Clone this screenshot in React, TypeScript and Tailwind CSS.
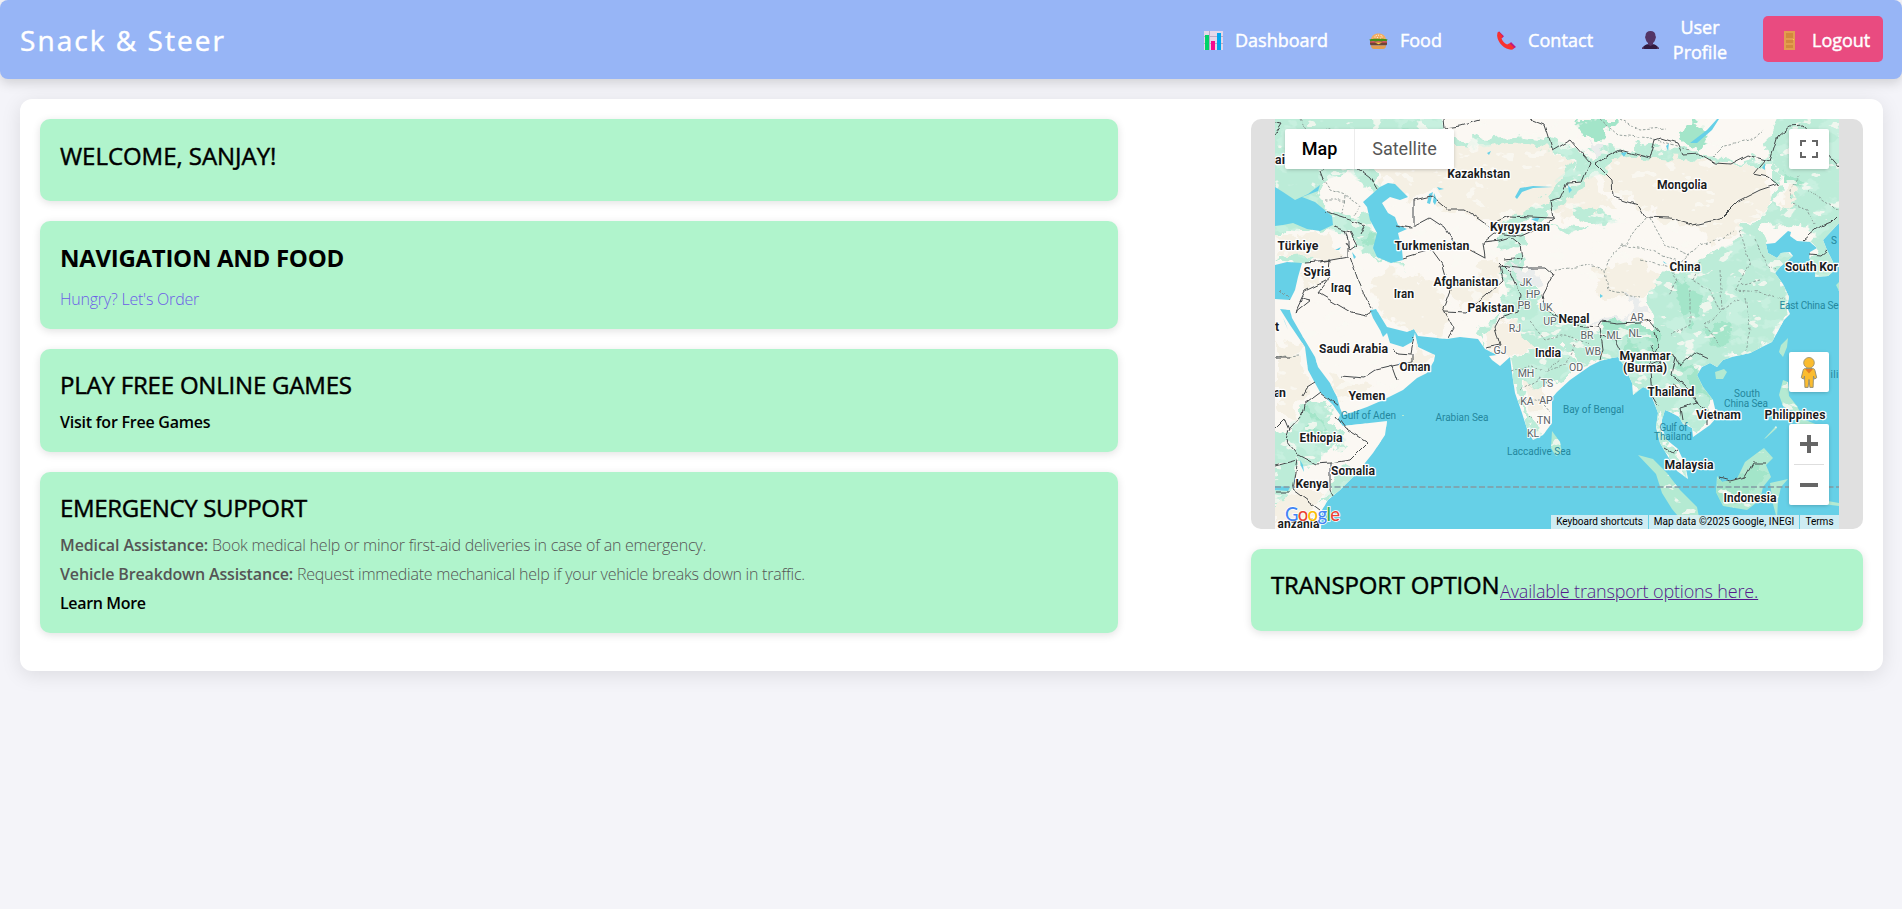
import type { ReactNode } from "react";

const medium = "[-webkit-text-stroke:0.45px_currentColor]";

function ChartIcon() {
  return (
    <svg width="19" height="19" viewBox="0 0 19 19" shapeRendering="crispEdges">
      <rect width="19" height="19" rx="1" fill="#e3d8ea" />
      <path d="M0 5.5h19M5.5 0v19M0 12.5h19" stroke="#b9abc6" strokeWidth="1" />
      <rect x="1" y="4" width="4" height="15" fill="#00d26a" />
      <rect x="7" y="10" width="4" height="9" fill="#f70a8d" />
      <rect x="13" y="2" width="4" height="17" fill="#00a6ed" />
    </svg>
  );
}

function BurgerIcon() {
  return (
    <svg width="19" height="19" viewBox="0 0 19 19">
      <path d="M2 9C2 5 5.2 2.4 9.5 2.4S17 5 17 9Z" fill="#f3ad61" />
      <path d="M5.5 6h1M9 4.2h1M12.5 6h1M8 6.6h1M11 7.2h1M6.8 4.6h1M11.6 4.6h1" stroke="#fff1dc" />
      <path d="M1 11.2h17v2.2c-.5 1-1.500 1.100-2.500 1.100H3.500C2 14.500 1.200 14 1 13Z" fill="#6d4534" />
      <path d="M1 10.300h17v1.200H1z" fill="#f8312f" />
      <path d="M.5 8.500c1-.9 17-.9 18 0l-.8 1.700-3-.3-2.200.7-3-.7-3 .7-2.500-.7-2.700.5Z" fill="#44911b" />
      <path d="M6 11.500h7l-3.500 1.700Z" fill="#fcd53f" />
      <path d="M2 14.500h15c0 2.300-1 3.500-3 3.500H5c-2 0-3-1.200-3-3.500Z" fill="#e39d4f" />
    </svg>
  );
}

function PhoneIcon() {
  return (
    <svg width="19" height="19" viewBox="0 0 19 19">
      <path d="M2 .3 7 5.200 4.600 7.500 1 3ZM14 11l5 5-3 2-4-4.500Z" fill="#c2197c" />
      <path d="M.5 1.500 1.800.8 5.600 5 4.500 7.200c.7 2.600 3.100 5.400 5.600 6.300l2.400-1.200 4.300 4-1 2.200c-6.300 1.300-15-5.500-15.700-13.700Z" fill="#f8312f" />
    </svg>
  );
}

function UserIcon() {
  return (
    <svg width="17" height="18" viewBox="0 0 17 18">
      <path d="M0 18c.3-2.300 2-3.200 5-4.800h7c3 1.600 4.700 2.500 5 4.800Z" fill="#321b41" />
      <path d="M0 18c.2-1 .6-1.700 1.300-2.300L2.500 18Zm17 0c-.2-1-.6-1.700-1.300-2.300L14.500 18Z" fill="#533566" />
      <path d="M8.500 0C11.600 0 13.500 1.700 13.500 5l.5 1-.6 2c-.5 2-1.300 3-2.400 4v1.500l-2.500 1.500L6 13.500V12C4.900 11 4.100 10 3.600 8L3 6l.5-1C3.500 1.700 5.400 0 8.500 0Z" fill="#533566" />
    </svg>
  );
}

function DoorIcon() {
  return (
    <svg width="11" height="19" viewBox="0 0 11 19" shapeRendering="crispEdges">
      <rect width="11" height="19" fill="#e39d4f" />
      <path d="M2 2h7v5H2zM2 9h7v3H2zM2 14h7v3H2z" fill="#d3883e" />
      <path d="M9 8h1v1H9z" fill="#fcd53f" />
    </svg>
  );
}

function Card({ children, className }: { children: ReactNode; className: string }) {
  return (
    <section className={`rounded-[10px] bg-[#b0f4cc] px-5 pt-5 shadow-[0_2px_8px_rgba(0,0,0,0.12)] ${className}`}>
      {children}
    </section>
  );
}

function Title({ children, className }: { children: ReactNode; className: string }) {
  return <h2 className={`text-[24px] leading-[34px] whitespace-nowrap text-black ${className}`}>{children}</h2>;
}

const LAND =
  "M1275 119H1839V223L1823 240 1827 250 1833 262 1835 270 1828 276 1815 277 1816 266 1809 258 1810 252 1817 248 1810 242 1797 241 1790 236 1791 232 1788 231 1775 243 1766 244 1768 253 1777 258 1781 253 1790 252 1793 256 1780 267 1775 273 1783 284 1789 297 1787 307 1790 314 1784 320 1772 342 1750 353 1732 357 1723 360 1717 367 1710 363 1702 367 1697 375 1703 387 1713 400 1717 417 1710 425 1693 437 1692 428 1683 424 1679 417 1670 412 1665 410 1662 420 1662 428 1667 440 1678 449 1685 464 1688 479 1677 471 1667 455 1660 443 1656 427 1658 413 1653 400 1650 390 1643 387 1633 395 1632 383 1625 367 1618 357 1612 358 1600 361 1590 366 1570 380 1557 392 1552 398 1552 423 1543 435 1533 440 1528 432 1522 413 1515 393 1512 373 1510 357 1500 366 1492 360 1489 356 1497 355 1485 349 1478 339 1460 337 1447 339 1418 336 1414 329 1407 332 1387 327 1376 309 1370 310 1373 318 1380 330 1383 337 1387 333 1390 343 1403 347 1412 342 1415 333 1418 347 1435 355 1434 361 1427 373 1417 378 1403 390 1383 400 1367 407 1353 412 1343 415 1340 408 1337 397 1330 383 1318 367 1315 357 1303 337 1292 318 1290 310 1280 309 1290 325 1305 347 1308 370 1315 383 1320 392 1333 405 1340 415 1338 420 1343 426 1387 421 1385 435 1373 453 1357 473 1340 490 1328 500 1322 510 1321 529H1275Z";

const ISLANDS =
  "M1552 431 1560 442 1562 453 1556 456 1551 448ZM1788 338 1787 347 1783 357 1779 352 1781 345ZM1715 372 1724 369 1727 372 1723 379 1716 379ZM1783 380 1788 382 1789 396 1797 406 1801 414 1788 409 1783 406 1779 395ZM1764 439 1776 426 1777 428 1766 438ZM1638 455 1653 459 1667 473 1680 490 1697 507 1700 522 1699 529 1688 528 1672 509 1662 493 1656 474ZM1717 476 1722 482 1737 479 1745 462 1757 453 1764 448 1773 458 1766 465 1771 477 1763 487 1760 500 1747 510 1723 506 1716 492ZM1770 483 1788 479 1781 487 1778 500 1777 519 1773 504ZM1700 529 1725 527 1725 529ZM1402 415 1404 415 1404 416 1402 416ZM1836 285 1839 282V291ZM1808 494 1822 500 1839 503V506L1815 503ZM1795 416 1818 425 1820 440 1801 437ZM1802 476 1806 479 1803 485Z";

const GREEN =
  "M1265 109H1440L1446 134 1464 140 1500 136 1520 134 1550 139 1576 146 1590 160 1597 155 1585 150 1610 147 1630 150 1645 143 1665 148 1690 150 1710 157 1750 161 1767 155 1778 170 1779 187 1770 200 1780 210 1800 195 1810 210 1790 224 1770 225 1758 232 1766 244 1772 255 1785 252 1793 256 1780 267 1783 284 1789 297 1787 307 1790 314 1784 320 1772 342 1750 353 1732 357 1710 363 1702 367 1697 375 1703 387 1713 400 1717 417 1710 425 1693 437 1683 424 1662 410 1662 428 1667 440 1678 449 1685 464 1688 479 1677 471 1660 443 1656 427 1658 413 1653 400 1650 390 1633 395 1625 367 1612 358 1580 364 1576 350 1560 345 1545 348 1530 343 1520 325 1500 312 1502 295 1510 285 1500 278 1504 262 1520 258 1526 284 1545 305 1560 318 1600 329 1640 332 1656 328 1650 310 1648 292 1668 272 1700 262 1718 250 1740 240 1738 227 1760 218 1768 208 1785 190 1772 180 1772 164 1720 162 1640 158 1620 157 1603 172 1590 180 1575 195 1560 208 1540 217 1518 222 1500 227 1495 221 1525 213 1552 195 1555 180 1575 165 1560 153 1535 147 1510 143 1480 148 1445 145 1410 145 1385 155 1375 170 1385 195 1368 190 1350 172 1325 180 1318 195 1332 210 1355 218 1370 215 1377 240 1375 255 1398 262 1408 267 1385 263 1365 250 1345 235 1325 228 1305 232 1290 230 1265 238ZM1275 262 1290 255 1305 254 1314 258 1300 264ZM1500 237 1520 230 1527 245 1505 252 1495 247ZM1480 345 1478 335 1490 318 1502 308 1498 322 1486 336ZM1310 405 1325 401 1332 420 1347 440 1325 452 1318 465 1303 464 1286 443 1291 420ZM1265 430 1285 432 1297 458 1295 490 1265 512ZM1510 357 1530 350 1565 350 1580 365 1553 385 1535 388 1525 382 1522 400 1533 425 1543 436 1533 440 1522 413 1515 393ZM1340 468 1355 475 1328 500 1318 508ZM1808 240 1849 216V280H1815L1810 258 1817 248ZM1785 109H1849V225L1823 240 1790 220 1800 195 1785 180 1765 150ZM1570 205 1600 212 1620 222 1600 226 1575 216ZM1550 222 1590 228 1570 234Z";

const DARKGREEN =
  "M1575 119H1620L1600 140 1580 132ZM1690 119 1710 135 1700 152 1680 140ZM1620 325 1655 325 1660 345 1655 365 1640 370 1630 350ZM1680 280 1705 290 1700 310 1690 330 1678 305ZM1717 476 1737 479 1757 460 1766 475 1745 500 1723 500ZM1310 410 1325 425 1320 445 1305 440ZM1680 360 1700 375 1711 400 1695 390ZM1780 170 1810 180 1800 190 1785 182ZM1600 322 1625 318 1640 330 1605 334ZM1370 230 1378 240 1380 255 1366 240ZM1410 119 1425 125 1420 135 1400 130ZM1700 330 1730 325 1745 340 1715 345Z";

const BEIGE =
  "M1440 135 1480 142 1530 142 1570 160 1575 180 1555 200 1530 215 1490 225 1470 215 1440 208 1430 190 1410 200 1390 185 1375 170 1390 150 1420 145ZM1590 160 1620 150 1650 154 1700 162 1760 164 1772 195 1765 212 1740 225 1738 235 1710 245 1700 228 1670 222 1640 205 1610 190ZM1550 190 1590 180 1615 205 1580 218 1550 212ZM1275 235 1300 237 1330 235 1345 255 1330 262 1310 258 1280 258ZM1380 270 1430 280 1450 310 1440 340 1420 335 1385 315 1370 290ZM1590 268 1640 260 1660 280 1640 300 1600 295ZM1303 270 1320 275 1310 290ZM1480 262 1505 258 1498 290 1478 300ZM1485 325 1530 318 1545 345 1510 355 1490 348ZM1325 375 1350 382 1375 385 1360 395 1335 400ZM1418 345 1434 358 1420 375 1408 370ZM1275 340 1300 345 1307 390 1290 420 1275 412ZM1295 480 1322 490 1315 515 1275 529V505ZM1790 185 1812 195 1800 215 1780 208ZM1450 285 1480 280 1490 300 1460 310ZM1525 378 1545 380 1545 415 1530 415Z";

const WATER =
  "M1275 187 1283 192 1295 200 1308 194 1320 185 1318 191 1302 197 1315 202 1332 216 1333 225 1320 231 1307 229 1293 223 1283 225 1275 226ZM1275 265 1287 262 1302 263 1298 277 1295 290 1290 300 1275 299ZM1363 202 1380 187 1388 183 1395 184 1408 197 1400 200 1390 197 1382 203 1388 213 1395 217 1398 225 1407 229 1398 233 1402 250 1403 260 1391 263 1377 257 1373 248 1377 233 1370 220 1367 207ZM1429 194 1433 192 1430 204 1427 203ZM1434 193 1437 200 1435 205 1433 202ZM1515 197 1520 188 1533 186 1553 187 1533 188 1522 192 1517 199ZM1717 119 1707 130 1690 143 1697 143 1712 130 1719 119ZM1437 187 1444 189 1439 190ZM1531 219 1540 217 1537 222ZM1621 153 1627 152 1624 157ZM1666 146 1669 143 1668 151ZM1762 168 1765 163 1765 170ZM1275 486 1290 487 1288 491 1275 490ZM1300 460 1303 465 1304 472 1301 466ZM1487 153 1491 151 1489 155ZM1352 252 1356 257 1354 259ZM1600 294 1603 296 1600 298ZM1568 185 1572 190 1569 193ZM1663 261 1667 264 1664 263ZM1335 250 1341 247 1339 250ZM1283 318 1288 330 1285 322Z";

const BORDERS =
  "M1444 119 1445 128 1460 126 1480 120M1530 119 1545 125 1553 150 1570 140 1590 163M1275 123 1282 124 1275 135M1323 180 1320 172 1325 168M1357 168 1370 178 1377 190M1595 163 1620 150 1650 158 1655 140 1661 138 1677 143 1683 155 1700 154 1715 163 1730 164 1747 155 1770 161 1778 136 1790 126 1803 125 1839 167M1765 160 1754 173 1768 176 1778 184 1760 190 1738 201 1732 207 1720 219 1693 225 1670 218 1645 217 1638 205 1613 197 1612 180 1595 163M1590 163 1582 182 1567 183 1560 198 1550 201 1553 218 1530 217 1510 216 1497 221 1494 230 1480 220 1465 210 1448 210 1431 196 1414 200V228M1395 225 1411 228 1430 218 1445 228 1453 240 1470 250 1485 258 1483 242 1500 240 1510 237 1520 245 1522 258 1505 260M1484 242 1495 233 1522 236 1540 228 1554 218M1443 309 1450 290 1443 265 1432 250 1420 253 1403 258M1445 312 1466 313 1487 295 1503 280 1500 265 1525 268 1545 268 1553 275 1542 295 1545 310 1575 325 1598 327 1602 321 1617 323 1640 322 1650 320 1660 332M1448 337 1453 328 1443 309M1500 262 1510 272 1520 295 1518 312 1500 318 1495 327 1500 345 1485 348M1552 308 1556 313 1552 318M1600 327 1603 350 1600 360M1600 335 1615 340 1620 350M1655 332 1658 345 1650 365 1672 355 1676 357 1680 365 1695 352 1708 358M1650 345 1660 363 1650 370 1652 395 1658 405M1676 357 1672 375 1685 385 1697 402 1707 410 1707 425M1672 383 1690 395 1697 403 1680 408 1682 420M1665 449 1672 453 1677 450M1719 478 1730 481 1745 477 1753 463 1766 463M1325 212 1350 220 1364 226 1360 234M1333 227 1350 232 1357 245 1350 250 1345 242M1320 262 1348 257 1348 240 1345 230M1305 262 1330 260 1328 280 1305 291 1295 312 1310 300 1302 298M1328 280 1318 293 1352 313 1367 316 1372 310M1350 257 1358 280 1367 300 1372 308M1341 376 1364 378 1376 370 1393 366 1398 380M1394 348 1397 353 1411 354 1414 337M1412 354V362L1393 366M1275 358H1290M1303 395 1307 388 1315 383M1304 404 1320 392 1338 406M1336 416 1345 428 1368 442 1350 460 1330 463M1304 404 1302 415 1290 428 1286 440 1298 455 1315 464 1330 463V490L1333 496M1275 428 1285 418 1290 430M1275 466 1298 460 1293 490 1320 510M1275 492H1290M1803 240 1815 230 1820 226 1830 222 1836 216M1809 254 1820 255 1827 249";

const DOTTED =
  "M1300 119 1310 135 1330 128 1350 140 1370 130 1390 138M1320 175 1330 190 1345 195 1360 205 1355 215M1325 200 1345 200M1345 195 1343 215M1600 119 1618 135 1650 138 1690 150M1620 119 1640 130 1665 128M1710 160 1725 145 1750 140 1765 130M1800 175 1790 190 1793 205 1808 210 1815 225M1807 190 1839 210M1550 271 1590 265 1605 270 1608 290 1640 297M1620 245 1650 250 1680 262 1700 245 1720 240 1735 230M1645 218 1625 245 1612 252 1605 270M1650 218 1665 245 1690 255M1700 262 1692 280 1710 290 1720 310 1740 300M1740 230 1750 262 1735 290 1760 292 1785 300M1720 270 1722 310 1705 325 1720 345M1745 298 1750 330 1745 350M1755 240 1765 262 1775 270M1690 290 1690 325 1670 335M1530 322 1545 340 1565 335 1590 345M1512 372 1530 365 1545 372 1560 360M1520 390 1540 378 1550 385M1525 400 1540 400 1550 412M1530 415 1540 425M1575 345 1565 365 1545 372M1300 356 1275 358M1280 290 1290 300M1760 280 1740 285M1640 260 1670 268 1678 280 1668 295";

type Label = [string, number, number, number];
const COUNTRIES: Label[] = [
  ["Kazakhstan", 1478.7, 177.5, 63], ["Türkiye", 1298, 250, 41], ["Syria", 1317, 276, 27], ["Iraq", 1341, 292, 20.5],
  ["Iran", 1404, 298, 20.5], ["Turkmenistan", 1432, 250, 75], ["Kyrgyzstan", 1520, 231, 60], ["Afghanistan", 1466, 286, 65],
  ["Pakistan", 1491, 312, 47], ["Mongolia", 1682, 189, 50], ["China", 1685, 271, 31], ["Nepal", 1574, 323, 31],
  ["India", 1548, 357, 26], ["Myanmar", 1645, 360, 51], ["(Burma)", 1645, 372, 44], ["Thailand", 1671, 396, 47],
  ["Vietnam", 1718.5, 419, 45], ["Philippines", 1795, 419, 61], ["Malaysia", 1689, 469, 49], ["Indonesia", 1750, 502, 53],
  ["Saudi Arabia", 1353.5, 353, 69], ["Oman", 1415, 371, 31], ["Yemen", 1367, 400, 37], ["Ethiopia", 1321, 442, 43],
  ["Somalia", 1353, 475, 44], ["Kenya", 1312, 488, 33], ["anzania", 1298.5, 528, 42], ["ai", 1280, 164, 10],
  ["t", 1277, 331, 4], ["an", 1280, 397, 12], ["South Kor", 1811.5, 271, 53],
];
const STATES: [string, number, number][] = [
  ["JK", 1526, 286], ["HP", 1533, 298], ["PB", 1524, 309], ["UK", 1546, 311], ["UP", 1550, 325], ["RJ", 1515, 332],
  ["GJ", 1500, 354], ["BR", 1587, 339], ["ML", 1614, 339], ["NL", 1635, 337], ["AR", 1637, 321], ["WB", 1593, 355],
  ["OD", 1576, 371], ["MH", 1526, 377], ["TS", 1547, 387], ["KA", 1527, 405], ["AP", 1546, 404], ["TN", 1544, 424], ["KL", 1533, 437],
];
const SEAS: Label[] = [
  ["Arabian Sea", 1462, 420.5, 53], ["Gulf of Aden", 1368.5, 418.5, 55], ["Laccadive Sea", 1539, 454.5, 64],
  ["Bay of Bengal", 1593.5, 412.5, 61], ["Gulf of", 1673.5, 430.5, 28], ["Thailand", 1673, 439.5, 38],
  ["South", 1747, 396.5, 26], ["China Sea", 1746, 406.5, 44], ["East China Se", 1809, 308.5, 59],
  ["S", 1834, 243.5, 6], ["ili", 1834.500, 377.5, 8],
];

function WorldMap() {
  return (
    <svg className="block" width="564" height="410" viewBox="1275 119 564 410" fontFamily="Roboto, sans-serif" textAnchor="middle">
      <defs>
        <clipPath id="land"><path d={LAND + ISLANDS} /></clipPath>
        <filter id="rough" x="-5%" y="-5%" width="110%" height="110%">
          <feTurbulence type="fractalNoise" baseFrequency="0.07" numOctaves="3" seed="4" />
          <feDisplacementMap in="SourceGraphic" scale="22" xChannelSelector="R" yChannelSelector="G" />
        </filter>
        <filter id="wiggle" x="-2%" y="-2%" width="104%" height="104%">
          <feTurbulence type="fractalNoise" baseFrequency="0.1" numOctaves="1" seed="9" />
          <feDisplacementMap in="SourceGraphic" scale="6" xChannelSelector="R" yChannelSelector="G" />
        </filter>
        <filter id="flecks" x="0" y="0" width="100%" height="100%">
          <feTurbulence type="fractalNoise" baseFrequency="0.06 0.1" numOctaves="3" seed="21" />
          <feColorMatrix values="0 0 0 0 0.96  0 0 0 0 0.945  0 0 0 0 0.9  0 22 0 0 -14.4" />
        </filter>
        <filter id="moss" x="0" y="0" width="100%" height="100%">
          <feTurbulence type="fractalNoise" baseFrequency="0.04 0.06" numOctaves="4" seed="33" />
          <feColorMatrix values="0 0 0 0 0.64  0 0 0 0 0.9  0 0 0 0 0.79  14 0 0 0 -7.8" />
          <feComposite in2="SourceGraphic" operator="in" />
        </filter>
      </defs>
      <rect x="1275" y="119" width="564" height="410" fill="#66d0e7" />
      <path d={LAND} fill="#fbf8f3" />
      <path d={ISLANDS} fill="#b4ead2" />
      <g clipPath="url(#land)">
        <path d={BEIGE} fill="#f5f0e4" filter="url(#rough)" />
        <g filter="url(#rough)">
          <path d={GREEN} fill="#bcecd8" />
          <path d={DARKGREEN} fill="#a3e5c9" />
        </g>
        <path d={GREEN} fill="#000" filter="url(#moss)" opacity="0.5" />
        <rect x="1275" y="119" width="564" height="410" filter="url(#flecks)" opacity="0.8" />
        <path d="M1510 262 1530 270 1545 285 1535 290 1515 275ZM1625 292 1645 305 1650 315 1635 312ZM1590 140 1605 150 1595 160ZM1590 322 1640 312 1600 326Z" fill="#e9ecec" filter="url(#rough)" />
      </g>
      <path d={WATER} fill="#66d0e7" />
      <g fill="none" strokeLinejoin="round" filter="url(#wiggle)">
        <path d={DOTTED} stroke="#7d8b88" strokeWidth="0.8" strokeDasharray="2.5 1.8" />
        <path d={BORDERS} stroke="#45494b" strokeWidth="1" />
      </g>
      <path d="M1275 487H1839" stroke="#8499a2" strokeWidth="1.4" strokeDasharray="6 2.5" />
      <g fontSize="10" fill="#24879d">
        {SEAS.map(([t, x, y, w]) => <text key={t + y} x={x} y={y} textLength={w}>{t}</text>)}
      </g>
      <g fontSize="10.5" fill="#5c6266" stroke="#fff" strokeWidth="2" strokeOpacity="0.85" strokeLinejoin="round" style={{ paintOrder: "stroke" }}>
        {STATES.map(([t, x, y]) => <text key={t} x={x} y={y}>{t}</text>)}
      </g>
      <g fontSize="12.3" fontWeight="700" fill="#1b1c1e" stroke="#fff" strokeWidth="2.5" strokeLinejoin="round" style={{ paintOrder: "stroke" }}>
        {COUNTRIES.map(([t, x, y, w]) => <text key={t + y} x={x} y={y} textLength={w}>{t}</text>)}
      </g>
      <text x="1285" y="521" fontFamily="Lato, sans-serif" fontSize="18.5" fontWeight="500" textAnchor="start" textLength="55" stroke="#fff" strokeWidth="1.5" style={{ paintOrder: "stroke" }}>
        <tspan fill="#4285f4">G</tspan><tspan fill="#ea4335">o</tspan><tspan fill="#fbbc04">o</tspan><tspan fill="#4285f4">g</tspan><tspan fill="#34a853">l</tspan><tspan fill="#ea4335">e</tspan>
      </text>
    </svg>
  );
}

function MapPanel() {
  return (
    <div className="flex h-[410px] w-[612px] justify-center overflow-hidden rounded-[10px] bg-[#e0e0e0] font-['Roboto',sans-serif]">
      <div className="relative h-[410px] w-[564px] overflow-hidden">
        <WorldMap />
        <div className="absolute top-[10px] left-[10px] flex h-10 rounded-[2px] bg-white text-[18px] leading-[39px] shadow-[0_1px_4px_-1px_rgba(0,0,0,0.3)]">
          <span className="w-[70px] border-r border-[#ececec] text-center font-medium text-black">Map</span>
          <span className="w-[99px] text-center text-[#565656]">Satellite</span>
        </div>
        <div className="absolute top-[10px] right-[10px] flex size-10 items-center justify-center rounded-[2px] bg-white shadow-[0_1px_4px_-1px_rgba(0,0,0,0.3)]">
          <svg width="18" height="18" viewBox="0 0 18 18"><path d="M0 0h6v2H2v4H0ZM12 0h6v6h-2V2h-4ZM0 12h2v4h4v2H0ZM16 12h2v6h-6v-2h4Z" fill="#666" /></svg>
        </div>
        <div className="absolute top-[233px] right-[10px] flex size-10 items-center justify-center rounded-[2px] bg-white shadow-[0_1px_4px_-1px_rgba(0,0,0,0.3)]">
          <svg width="18" height="31" viewBox="0 0 18 31">
            <path d="M5.500 11.500h7c1.500 0 2.200.8 2.500 2.200l1.700 7-2.200 1.400-1-3-.4 11.300H9.900L9 22.500l-.9 7.900H4.900L4.500 19.100l-1 3-2.200-1.400 1.700-7c.3-1.400 1-2.200 2.500-2.200Z" fill="#fbbc2f" stroke="#8d8a72" strokeWidth="0.9" />
            <circle cx="9" cy="5.8" r="5.3" fill="#fbbc2f" stroke="#9c9372" strokeWidth="0.9" />
            <path d="M5 12h8l-4 4.5Z" fill="#e37d25" />
          </svg>
        </div>
        <div className="absolute top-[305px] right-[10px] flex h-[81px] w-10 flex-col items-center justify-between rounded-[2px] bg-white shadow-[0_1px_4px_-1px_rgba(0,0,0,0.3)]">
          <span className="flex h-10 items-center"><svg width="18" height="18" viewBox="0 0 18 18"><path d="M7 0h4v7h7v4h-7v7H7v-7H0V7h7Z" fill="#666" /></svg></span>
          <span className="h-px w-[30px] bg-[#dedede]" />
          <span className="flex h-10 items-center"><svg width="18" height="4" viewBox="0 0 18 4"><path d="M0 0h18v4H0Z" fill="#666" /></svg></span>
        </div>
        <div className="absolute right-0 bottom-0 flex h-[14px] text-[10px] leading-[14px] whitespace-nowrap text-black">
          <span className="w-[97px] bg-[#e1f1f4]/85 text-center">Keyboard shortcuts</span>
          <span className="ml-px w-[150px] bg-[#e1f1f4]/85 text-center tracking-[0.08px]">Map data ©2025 Google, INEGI</span>
          <span className="ml-px w-[39px] bg-[#e1f1f4]/85 text-center">Terms</span>
        </div>
      </div>
    </div>
  );
}

export default function App() {
  return (
    <div className="h-[909px] overflow-hidden bg-[#f4f4f9] font-['Open_Sans','Noto_Sans',sans-serif] text-black">
      <header className="flex h-[79px] items-center justify-between rounded-[8px] bg-[#97b5f6] px-5 pr-[19px] text-white shadow-[0_4px_12px_rgba(0,0,0,0.15)]">
        <h1 className={`text-[28px] leading-[42px] tracking-[2.05px] ${medium}`}>Snack &amp; Steer</h1>
        <nav className={`flex items-center text-[18px] leading-[25px] ${medium}`}>
          <a className="mr-[42px] flex items-center gap-3 pt-0.5"><ChartIcon /><span className="w-[92px] whitespace-nowrap">Dashboard</span></a>
          <a className="mr-[55px] flex items-center gap-3 pt-0.5"><BurgerIcon /><span className="w-[42px] whitespace-nowrap">Food</span></a>
          <a className="mr-[48px] flex items-center gap-3 pt-0.5"><PhoneIcon /><span className="w-[66px] tracking-[0.1px] whitespace-nowrap">Contact</span></a>
          <a className="mr-[35px] flex items-center gap-[13px]"><UserIcon /><span className="w-[56px] text-center">User Profile</span></a>
          <a className="mb-px flex h-[46px] w-[120px] items-center gap-[17px] rounded-[5px] bg-[#e94b80] pt-0.5 pl-[21px]"><DoorIcon /><span>Logout</span></a>
        </nav>
      </header>
      <main className="mx-5 mt-5 mr-[19px] flex h-[572px] justify-between rounded-[12px] bg-white p-5 shadow-[0_4px_20px_rgba(0,0,0,0.1)]">
        <div className="flex w-[1078px] flex-col">
          <Card className="h-[82px]">
            <Title className={`tracking-[-0.04px] ${medium}`}>WELCOME, SANJAY!</Title>
          </Card>
          <Card className="mt-5 h-[108px]">
            <Title className="font-bold tracking-[-0.29px]">NAVIGATION AND FOOD</Title>
            <a className="mt-[10px] block text-[16px] leading-[29px] font-light tracking-[-0.22px] text-[#6c5ce7]">Hungry? Let's Order</a>
          </Card>
          <Card className="mt-5 h-[103px]">
            <Title className={`-mt-px tracking-[-0.2px] ${medium}`}>PLAY FREE ONLINE GAMES</Title>
            <a className="mt-1.5 block text-[16px] leading-[29px] font-semibold tracking-[-0.23px]">Visit for Free Games</a>
          </Card>
          <Card className="mt-5 h-[161px]">
            <Title className={`-mt-px tracking-[-0.35px] ${medium}`}>EMERGENCY SUPPORT</Title>
            <p className="mt-1.5 text-[16px] leading-[29px] font-light tracking-[-0.23px] text-[#555]">
              <strong className="font-semibold tracking-[-0.1px]">Medical Assistance:</strong> Book medical help or minor first-aid deliveries in case of an emergency.
            </p>
            <p className="text-[16px] leading-[29px] font-light tracking-[-0.238px] text-[#555]">
              <strong className="font-semibold tracking-[-0.156px]">Vehicle Breakdown Assistance:</strong> Request immediate mechanical help if your vehicle breaks down in traffic.
            </p>
            <a className="block text-[16px] leading-[29px] font-semibold tracking-[-0.35px]">Learn More</a>
          </Card>
        </div>
        <div className="flex w-[612px] flex-col">
          <MapPanel />
          <Card className="mt-5 flex h-[82px] items-start">
            <Title className={`-mt-px w-[229px] tracking-[-0.2px] ${medium}`}>TRANSPORT OPTION</Title>
            <a className="pt-[5px] text-[18px] leading-[34px] font-light tracking-[-0.16px] whitespace-nowrap text-[#551a8b] underline">Available transport options here.</a>
          </Card>
        </div>
      </main>
    </div>
  );
}
